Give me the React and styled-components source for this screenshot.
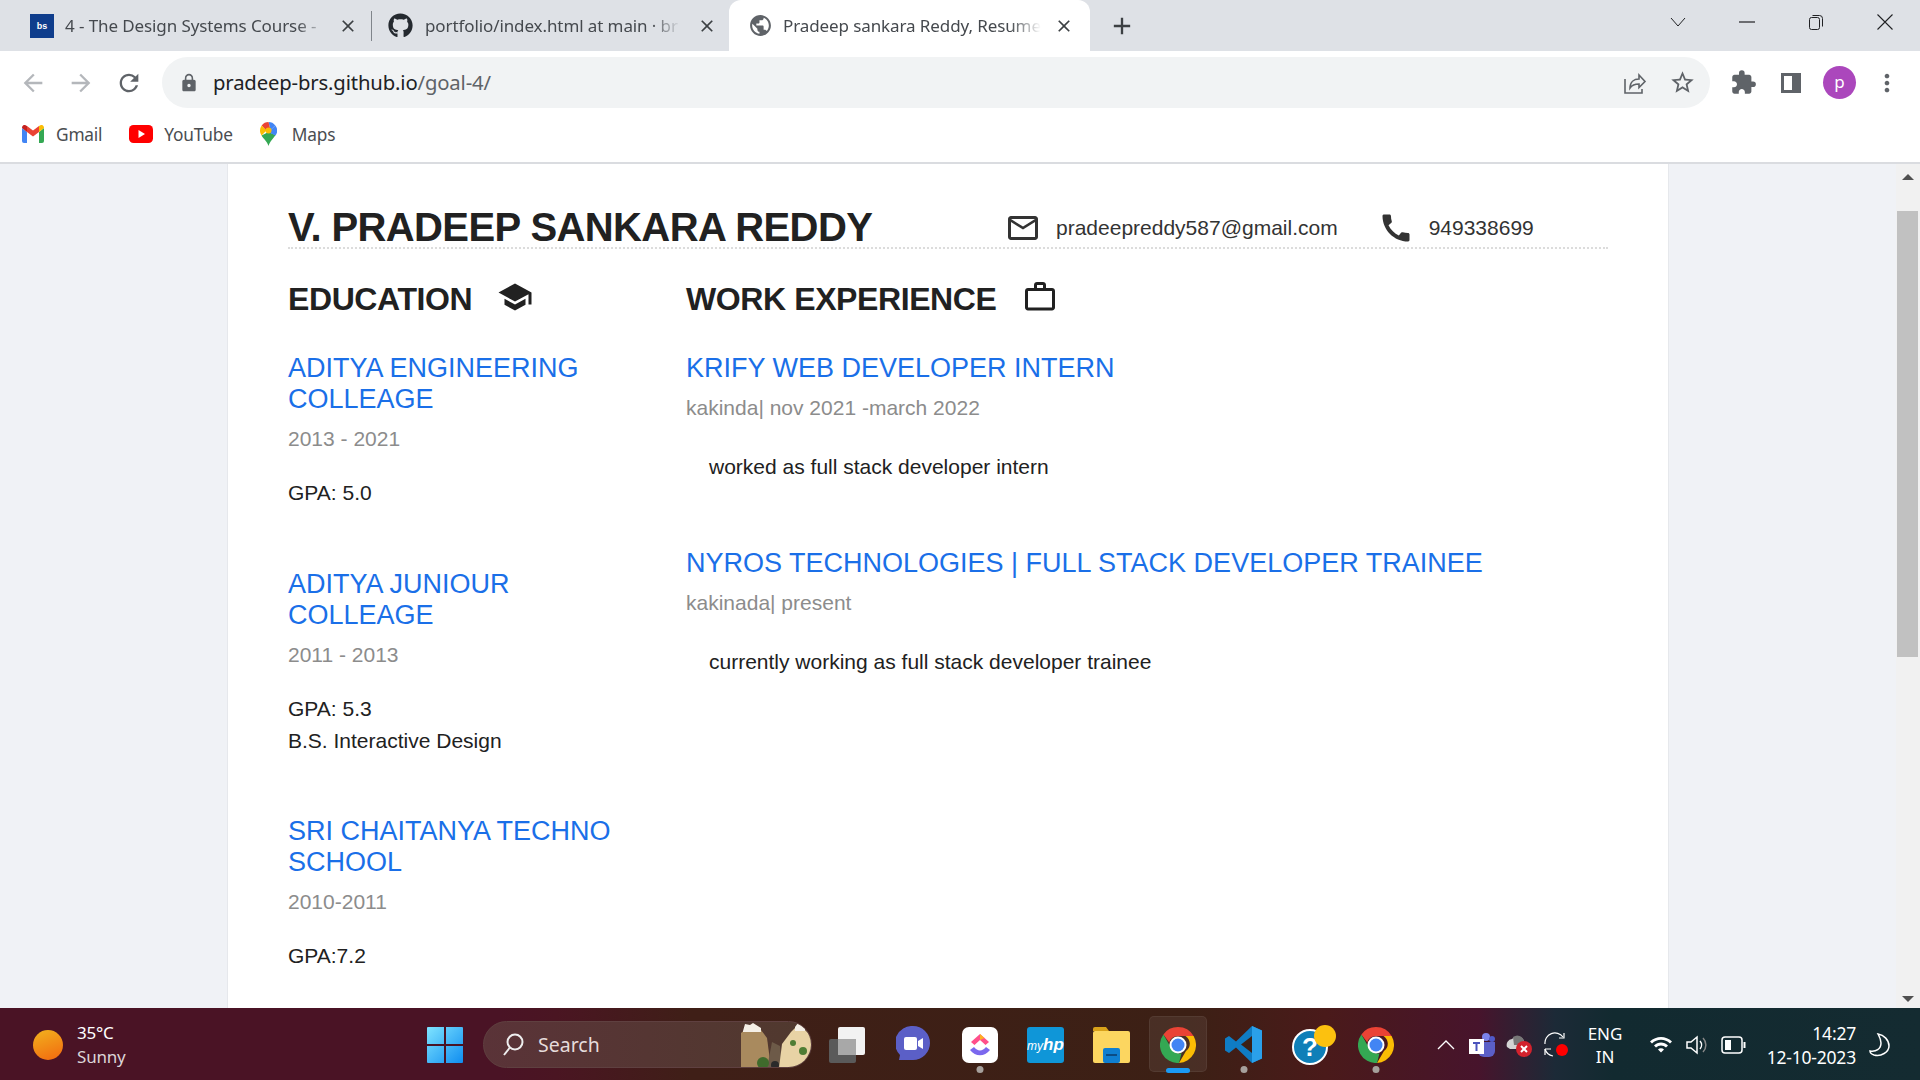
import styled, { createGlobalStyle } from 'styled-components'
import { FaGithub } from 'react-icons/fa'
import {
  MdArrowBack, MdArrowForward, MdRefresh, MdLock, MdStarBorder, MdExtension, MdMoreVert,
  MdClose, MdAdd, MdPublic, MdMailOutline, MdCall, MdSchool, MdWorkOutline, MdWifi,
} from 'react-icons/md'

const Global = createGlobalStyle`
  html, body { margin: 0; padding: 0; height: 100%; overflow: hidden; }
  body { font-family: "Liberation Sans", Arial, sans-serif; background: #fff; }
  * { box-sizing: border-box; }
`

const Screen = styled.div`
  width: 1920px;
  height: 1080px;
  display: flex;
  flex-direction: column;
  overflow: hidden;
`

/* chrome */
const TabStrip = styled.div`
  height: 51px;
  flex: none;
  display: flex;
  align-items: stretch;
  background: #dee1e6;
  font-family: "Noto Sans", sans-serif;
`

const Tab = styled.div`
  width: ${p => p.$w}px;
  display: flex;
  align-items: center;
  padding-left: ${p => p.$pad}px;
  border-radius: 12px 12px 0 0;
  background: ${p => (p.$active ? '#fff' : 'transparent')};
  color: #45494e;
`

const TabSep = styled.div`
  width: 1px;
  height: 30px;
  margin-top: 11px;
  background: #80858b;
`

const TabTitle = styled.span`
  width: ${p => p.$w}px;
  margin-left: ${p => p.$ml}px;
  font-size: 17px;
  white-space: nowrap;
  overflow: hidden;
  letter-spacing: -0.1px;
  -webkit-mask-image: linear-gradient(90deg, #000 88%, transparent);
  mask-image: linear-gradient(90deg, #000 88%, transparent);
`

const TabClose = styled(MdClose)`
  font-size: 20px;
  margin-left: ${p => p.$ml}px;
  color: #3c4043;
  flex: none;
`

const Favicon = styled.div`
  width: 24px;
  height: 24px;
  background: #0f3d8c;
  color: #fff;
  font-size: 9px;
  font-weight: 700;
  display: flex;
  align-items: center;
  justify-content: center;
  font-family: "Liberation Sans", sans-serif;
  flex: none;
`

const NewTab = styled(MdAdd)`
  font-size: 28px;
  color: #3c4043;
  align-self: center;
  margin-left: 18px;
`

const WinButtons = styled.div`
  margin-left: auto;
  display: flex;
  align-items: center;
  height: 44px;
  color: #202124;
`

const WinBtn = styled.div`
  width: ${p => p.$w || 69}px;
  display: flex;
  justify-content: center;
`

const Toolbar = styled.div`
  height: 57px;
  flex: none;
  background: #fff;
  display: flex;
  align-items: flex-start;
  padding-top: 6px;
`

const NavIcons = styled.div`
  width: 162px;
  height: 51px;
  flex: none;
  display: flex;
  align-items: center;
  padding-left: 19px;
  gap: 20px;
  font-size: 28px;
`

const NavIcon = styled.span`
  display: flex;
  color: ${p => (p.$off ? '#b4b7bb' : '#5f6368')};
`

const Omnibox = styled.div`
  width: 1548px;
  height: 51px;
  flex: none;
  background: #f1f3f4;
  border-radius: 26px;
  display: flex;
  align-items: center;
  padding: 0 14px 0 17px;
  color: #5f6368;
`

const Url = styled.div`
  margin-left: 14px;
  padding-bottom: 2px;
  font-family: "Noto Sans", sans-serif;
  font-size: 20.3px;
  letter-spacing: -0.15px;
  color: #202124;
  span { color: #5f6368; }
`

const OmniRight = styled.div`
  margin-left: auto;
  display: flex;
  align-items: center;
  gap: 22px;
`

const ToolIcons = styled.div`
  flex: 1;
  height: 51px;
  display: flex;
  align-items: center;
  padding-left: 20px;
  color: #5f6368;
`

const PanelIcon = styled.div`
  width: 20px;
  height: 20px;
  margin-left: 24px;
  border: 3px solid #5f6368;
  border-right-width: 9px;
`

const Avatar = styled.div`
  width: 33px;
  height: 33px;
  margin-left: 22px;
  border-radius: 50%;
  background: #ab47bc;
  color: #fff;
  font-family: "Noto Sans", sans-serif;
  font-size: 17px;
  display: flex;
  align-items: center;
  justify-content: center;
  padding-bottom: 3px;
`

const MoreIcon = styled(MdMoreVert)`
  font-size: 28px;
  margin-left: 17px;
`

const Bookmarks = styled.div`
  height: 56px;
  flex: none;
  display: flex;
  align-items: center;
  gap: 27px;
  padding: 0 0 2px 22px;
  background: #fff;
  border-bottom: 2px solid #dadce0;
  font-family: "Noto Sans", sans-serif;
  font-size: 17.3px;
  letter-spacing: -0.2px;
  color: #4a4d51;
`

const Bookmark = styled.div`
  display: flex;
  align-items: center;
  gap: ${p => p.$gap}px;
`

/* page */
const Viewport = styled.div`
  flex: 1;
  min-height: 0;
  display: flex;
  background: #f0f2f6;
  overflow: hidden;
`

const Gutter = styled.div`
  width: ${p => p.$w}px;
  flex: none;
`

const Sheet = styled.main`
  width: 1442px;
  flex: none;
  background: #fff;
  padding: 0 60px;
  border-left: 1px solid #e6e8ec;
  border-right: 1px solid #e6e8ec;
  overflow: hidden;
  height: 0;
  min-height: 100%;
`

const Header = styled.header`
  height: 85px;
  display: flex;
  align-items: flex-end;
  border-bottom: 2px dotted #dcdcdc;
  padding-bottom: 1px;
`

const Name = styled.h1`
  margin: 0;
  width: 717px;
  flex: none;
  font-size: 40px;
  line-height: 37px;
  font-weight: 700;
  letter-spacing: -0.6px;
  color: #212121;
  white-space: nowrap;
`

const Contact = styled.div`
  display: flex;
  align-items: center;
  height: 36px;
  font-size: 21px;
  color: #333;
  margin-right: 40px;
  svg { font-size: 36px; color: #333; margin-right: 15px; flex: none; }
`

const Columns = styled.div`
  display: grid;
  grid-template-columns: 398px 1fr;
`

const SectionTitle = styled.h2`
  margin: 30px 0 34px;
  height: 40px;
  display: flex;
  align-items: center;
  gap: 25px;
  font-size: 32px;
  font-weight: 700;
  color: #212121;
  letter-spacing: -0.4px;
  svg { font-size: 36px; margin-top: -4px; }
`

const Entry = styled.section`
  margin-bottom: ${p => p.$mb}px;
`

const EntryTitle = styled.h3`
  margin: 0;
  font-size: 27px;
  line-height: 31px;
  font-weight: 400;
  color: #1a6fe8;
  max-width: ${p => p.$max || 'none'};
`

const EntryMeta = styled.div`
  margin-top: 8px;
  font-size: 21px;
  line-height: 32px;
  color: #8c8c8c;
`

const EntryBody = styled.div`
  margin-top: ${p => p.$mt}px;
  padding-left: ${p => p.$indent || 0}px;
  font-size: 21px;
  line-height: 32px;
  color: #212121;
`

const ScrollBar = styled.div`
  width: 24px;
  flex: none;
  margin-left: auto;
  background: #f1f1f1;
  position: relative;
  display: flex;
  flex-direction: column;
  justify-content: space-between;
  align-items: center;
  padding: 10px 0 6px;
`

const ScrollThumb = styled.div`
  position: absolute;
  left: 1px;
  right: 2px;
  top: 47px;
  height: 446px;
  background: #c1c1c1;
`

const Arrow = styled.div`
  width: 0;
  height: 0;
  border-left: 6px solid transparent;
  border-right: 6px solid transparent;
  ${p => (p.$down ? 'border-top: 6px solid #505050;' : 'border-bottom: 6px solid #505050;')}
`

/* taskbar */
const Taskbar = styled.footer`
  height: 72px;
  flex: none;
  display: flex;
  align-items: center;
  padding-top: 1px;
  color: #fff;
  font-family: "Noto Sans", sans-serif;
  background: linear-gradient(90deg, #4a1325 0%, #4a1325 26%, #4a1522 29%, #3f1f17 36%, #3c2015 62%, #4a1a1a 69%, #47142c 77%, #1c2a37 81%, #122a30 84%, #142b31 100%);
`

const Weather = styled.div`
  width: 427px;
  flex: none;
  display: flex;
  align-items: center;
  padding-left: 33px;
  gap: 14px;
`

const WeatherText = styled.div`
  font-size: 17px;
  line-height: 24px;
  letter-spacing: -0.2px;
  div + div { color: #dcd5d8; }
`

const SunDot = styled.div`
  width: 30px;
  height: 30px;
  border-radius: 50%;
  background: linear-gradient(160deg, #f2b21e, #f2680f);
`

const SearchBox = styled.div`
  width: 329px;
  height: 47px;
  flex: none;
  margin: 0 17px 0 20px;
  border-radius: 24px;
  background: linear-gradient(90deg, #5a3338, #50392e);
  border: 1px solid #5f4040;
  display: flex;
  align-items: center;
  padding-left: 18px;
  overflow: hidden;
  font-size: 19.5px;
  color: #e6dcdc;
  gap: 14px;
`

const SearchArt = styled.svg`
  margin-left: auto;
  flex: none;
`

const TaskIcon = styled.div`
  width: ${p => p.$w || 36}px;
  height: 36px;
  flex: none;
  margin-left: ${p => p.$ml || 0}px;
  position: relative;
  display: flex;
  align-items: center;
  justify-content: center;
  ${p => p.$active && `
    &::before {
      content: '';
      position: absolute;
      left: -11px; right: -11px; top: -11px; bottom: -9px;
      background: rgba(255,255,255,.07);
      border: 1px solid rgba(255,255,255,.06);
      border-radius: 5px;
    }
  `}
  ${p => p.$dot && `
    &::after {
      content: '';
      position: absolute;
      left: 50%;
      bottom: -10px;
      width: ${p.$active ? 24 : 7}px;
      height: ${p.$active ? 5 : 7}px;
      transform: translateX(-50%);
      border-radius: 4px;
      background: ${p.$active ? '#1a9bf5' : '#a6a09c'};
    }
  `}
  > svg { position: relative; z-index: 1; }
`

const Lang = styled.div`
  width: 36px;
  flex: none;
  margin-left: 18px;
  font-size: 17px;
  line-height: 23px;
  text-align: center;
`

const Clock = styled.div`
  width: 92px;
  flex: none;
  margin-left: 18px;
  font-size: 17.5px;
  line-height: 24px;
  text-align: right;
  letter-spacing: -0.2px;
  white-space: nowrap;
`

/* drawn logos */
const GmailLogo = () => (
  <svg width="22" height="18" viewBox="0 0 22 18">
    <path d="M0 3v13a2 2 0 0 0 2 2h3V7z" fill="#4285f4" />
    <path d="M22 3v13a2 2 0 0 1-2 2h-3V7z" fill="#34a853" />
    <path d="M5 7l6 4.500L17 7V1l-6 4.500L5 1z" fill="#ea4335" />
    <path d="M0 3l5 4V1L3.500.2C2-.6 0 .6 0 3z" fill="#c5221f" />
    <path d="M22 3l-5 4V1l1.500-.8C20-.6 22 .6 22 3z" fill="#fbbc04" />
  </svg>
)

const YoutubeLogo = () => (
  <svg width="24" height="18" viewBox="0 0 24 18">
    <rect width="24" height="18" rx="4.500" fill="#f00" />
    <path d="M9.500 5l6.500 4-6.500 4z" fill="#fff" />
  </svg>
)

const MapsLogo = () => (
  <svg width="17" height="24" viewBox="0 0 17 24">
    <path d="M1.500 13.500C3.500 17 7 19 8.500 24c1.500-5 5-7.500 7-11L8.500 10z" fill="#34a853" />
    <path d="M8.500 0a8.500 8.500 0 0 1 6.800 3.400L10.500 8z" fill="#4285f4" />
    <path d="M15.300 3.400A8.500 8.500 0 0 1 15.500 13.500L8 10l2.500-2z" fill="#4285f4" />
    <path d="M1.700 3.400A8.500 8.500 0 0 1 8.500 0l2 8-4 1z" fill="#ea4335" />
    <path d="M0 8.500a8.500 8.500 0 0 1 1.700-5.100l4.800 5.100L1.500 13.500A8 8 0 0 1 0 8.500z" fill="#fbbc04" />
    <circle cx="8.500" cy="8.500" r="3" fill="#fbbc04" />
  </svg>
)

const ChromeLogo = ({ size = 36 }) => (
  <svg width={size} height={size} viewBox="0 0 36 36">
    <path d="M18 0a18 18 0 0 1 15.600 9H18a9 9 0 0 0-8.700 6.500L3.400 7.400A18 18 0 0 1 18 0z" fill="#ea4335" />
    <path d="M33.600 9A18 18 0 0 1 19 36l7-12a9 9 0 0 0-.5-15z" fill="#fbbc04" />
    <path d="M3.400 7.400L10.500 20a9 9 0 0 0 11 6.200L19 36A18 18 0 0 1 3.400 7.400z" fill="#34a853" />
    <circle cx="18" cy="18" r="8.500" fill="#fff" />
    <circle cx="18" cy="18" r="6.500" fill="#4285f4" />
  </svg>
)

const TaskView = () => (
  <svg width="36" height="36" viewBox="0 0 36 36">
    <rect x="0" y="12" width="27" height="24" rx="2" fill="#5a5a5a" />
    <rect x="9" y="0" width="27" height="28" rx="2" fill="#f2f2f2" />
    <rect x="9" y="12" width="18" height="16" fill="#a8a8a8" />
  </svg>
)

const MeetLogo = () => (
  <svg width="34" height="38" viewBox="0 0 34 38">
    <path d="M17 0a17 17 0 0 1 0 34H3l1-5A17 17 0 0 1 17 0z" fill="#5b5fc7" />
    <rect x="8" y="11" width="13" height="13" rx="2" fill="#fff" />
    <path d="M22 15l5-3v11l-5-3z" fill="#fff" />
  </svg>
)

const ClickupLogo = () => (
  <svg width="36" height="36" viewBox="0 0 36 36">
    <rect width="36" height="36" rx="7" fill="#fff" />
    <path d="M9 15l9-8 9 8-3.500 3L18 13l-5.500 5z" fill="#ff4f8b" />
    <path d="M8 23l4-3c3.500 4.500 8.500 4.500 12 0l4 3c-5.500 7-14.500 7-20 0z" fill="#7b68ee" />
    <path d="M18 7l4.500 4L18 13z" fill="#ffb020" />
  </svg>
)

const MyHpLogo = () => (
  <svg width="37" height="36" viewBox="0 0 37 36">
    <rect width="37" height="36" rx="3" fill="#0f96d8" />
    <text x="18.500" y="23" textAnchor="middle" fill="#fff" fontSize="12" fontFamily="Liberation Sans" fontStyle="italic">my<tspan fontWeight="700" fontSize="17">hp</tspan></text>
  </svg>
)

const FolderLogo = () => (
  <svg width="37" height="36" viewBox="0 0 37 36">
    <path d="M0 2a2 2 0 0 1 2-2h11l3 4h-16z" fill="#d9a21a" />
    <rect y="4" width="37" height="32" rx="2" fill="#fcd660" />
    <rect x="10" y="21" width="17" height="15" rx="2" fill="#0f7fd1" />
    <rect x="13" y="27" width="11" height="2" fill="#0b4c85" />
  </svg>
)

const VscodeLogo = () => (
  <svg width="37" height="37" viewBox="0 0 37 37">
    <path d="M27 0l10 4.500v28L27 37 11 21.500 4 27l-4-2.500V12.500L4 10l7 5.500z" fill="#0f7cc4" />
    <path d="M27 0l10 4.500v28L27 37z" fill="#2aa0ea" />
    <path d="M27 10L16 18.500 27 27z" fill="#3c2015" />
  </svg>
)

const HelpLogo = () => (
  <svg width="44" height="40" viewBox="0 0 44 40">
    <circle cx="18" cy="22" r="17" fill="#0f7fb8" stroke="#fff" strokeWidth="2" />
    <text x="18" y="31" textAnchor="middle" fill="#fff" fontSize="26" fontWeight="700" fontFamily="Liberation Sans">?</text>
    <circle cx="33" cy="11" r="11" fill="#fcc10f" />
  </svg>
)

const SearchGlass = () => (
  <svg width="22" height="24" viewBox="0 0 22 24" fill="none" stroke="#eee" strokeWidth="2">
    <circle cx="13" cy="9" r="7.500" />
    <path d="M7.500 15L2 22" />
  </svg>
)

const Landscape = () => (
  <SearchArt width="70" height="47" viewBox="0 0 70 47">
    <path d="M0 47V12l6-5 14 2 6 8 4 30z" fill="#a98a5e" />
    <path d="M26 47l5-26 8 4 2 22z" fill="#6d5a48" />
    <path d="M38 47l3-24 9-12 8-8 12 12v32z" fill="#e8d3a5" />
    <path d="M2 10l2-7 5 1 3-2 8 5v4H2zM54 6l3-4 5-1 2 5v4H54z" fill="#f4efe6" />
    <circle cx="22" cy="42" r="6" fill="#3f6b2c" />
    <circle cx="34" cy="44" r="4" fill="#2a2a2a" />
    <circle cx="52" cy="22" r="3" fill="#4f7d34" />
    <circle cx="62" cy="30" r="4" fill="#4f7d34" />
  </SearchArt>
)

const TeamsIcon = () => (
  <svg width="26" height="26" viewBox="0 0 26 26">
    <circle cx="17" cy="5" r="4" fill="#7b83eb" />
    <circle cx="23" cy="7" r="3" fill="#5059c9" />
    <path d="M9 10h17v9a6 6 0 0 1-6 6h-5a6 6 0 0 1-6-6z" fill="#5b5fc7" />
    <rect y="7" width="15" height="15" fill="#fff" />
    <path d="M4 10h7v2H8.500v7h-2v-7H4z" fill="#4b53bc" />
  </svg>
)

const CloudOff = () => (
  <svg width="26" height="24" viewBox="0 0 26 24">
    <path d="M1 14a6 6 0 0 1 5-8 7 7 0 0 1 12 2v8H4z" fill="#d4d4d4" />
    <path d="M7 4a7 7 0 0 1 11 4v4H8z" fill="#777" />
    <circle cx="18" cy="16" r="8" fill="#d3222d" />
    <path d="M15 13l6 6m0-6l-6 6" stroke="#fff" strokeWidth="2" />
  </svg>
)

const SyncIcon = () => (
  <svg width="26" height="26" viewBox="0 0 26 26" fill="none" stroke="#fff" strokeWidth="1.200">
    <path d="M2 12A10 10 0 0 1 20 5" />
    <path d="M21 1v5h-5" />
    <path d="M2 17h6M2 17v6" />
    <path d="M2 17a10 10 0 0 0 8 7" />
    <circle cx="19" cy="18" r="6" fill="#f00" stroke="none" />
  </svg>
)

const VolumeIcon = () => (
  <svg width="24" height="24" viewBox="0 0 24 24" fill="none" stroke="#fff" strokeWidth="1.500">
    <path d="M2 9h4l6-5v16l-6-5H2z" />
    <path d="M15 8a6 6 0 0 1 0 8" />
    <path d="M18 5a10 10 0 0 1 0 14" stroke="#888" />
  </svg>
)

const BatteryIcon = () => (
  <svg width="25" height="18" viewBox="0 0 25 18" fill="none" stroke="#fff" strokeWidth="1.500">
    <rect x="1" y="1" width="20" height="16" rx="3" />
    <rect x="4" y="4" width="6" height="10" fill="#fff" stroke="none" />
    <path d="M23.500 6v6" strokeWidth="2" />
  </svg>
)

const MoonIcon = () => (
  <svg width="22" height="26" viewBox="0 0 22 26" fill="none" stroke="#fff" strokeWidth="1.500">
    <path d="M9 2c6 1 11 6 11 12 0 6-8 11-15 9-3-1-4-3-4-4 6 1 11-2 11-8 0-4-2-7-3-9z" />
  </svg>
)

const WinLogo = () => (
  <svg width="36" height="36" viewBox="0 0 36 36">
    <defs>
      <linearGradient id="w" x1="0" y1="0" x2="1" y2="1">
        <stop offset="0" stopColor="#7fe4ff" />
        <stop offset="1" stopColor="#0f8df0" />
      </linearGradient>
    </defs>
    <path d="M0 1a1 1 0 0 1 1-1h16v17H0zM19 0h16a1 1 0 0 1 1 1v16H19zM0 19h17v17H1a1 1 0 0 1-1-1zM19 19h17v16a1 1 0 0 1-1 1H19z" fill="url(#w)" />
  </svg>
)

const ShareIcon = () => (
  <svg width="24" height="24" viewBox="0 0 24 24" fill="none" stroke="#5f6368" strokeWidth="1.600">
    <path d="M2 8v14h17v-4" />
    <path d="M7 17c0-6 4-9 9-9V4l6 6.500-6 6V13c-4 0-7 1-9 4z" />
  </svg>
)

const ChevronThin = () => (
  <svg width="16" height="10" viewBox="0 0 16 10" fill="none" stroke="#202124" strokeWidth="1">
    <path d="M1 1l7 8 7-8" />
  </svg>
)

const MinimizeIcon = () => (
  <svg width="16" height="16" viewBox="0 0 16 16">
    <path d="M0 8h16" stroke="#202124" strokeWidth="1.200" />
  </svg>
)

const RestoreIcon = () => (
  <svg width="16" height="16" viewBox="0 0 16 16" fill="none" stroke="#202124" strokeWidth="1">
    <rect x="1.500" y="3.500" width="10" height="12" rx="2" />
    <path d="M4.500 1.500h7a3 3 0 0 1 3 3v8" />
  </svg>
)

const CloseThin = () => (
  <svg width="16" height="16" viewBox="0 0 16 16" fill="none" stroke="#202124" strokeWidth="1.100">
    <path d="M.5.500l15 15m0-15l-15 15" />
  </svg>
)

const CaretUp = () => (
  <svg width="18" height="11" viewBox="0 0 18 11" fill="none" stroke="#fff" strokeWidth="1.300">
    <path d="M1 10l8-8 8 8" />
  </svg>
)

const education = [
  { name: 'ADITYA ENGINEERING COLLEAGE', years: '2013 - 2021', lines: ['GPA: 5.0'] },
  { name: 'ADITYA JUNIOUR COLLEAGE', years: '2011 - 2013', lines: ['GPA: 5.3', 'B.S. Interactive Design'] },
  { name: 'SRI CHAITANYA TECHNO SCHOOL', years: '2010-2011', lines: ['GPA:7.2'] },
]

const work = [
  { name: 'KRIFY WEB DEVELOPER INTERN', meta: 'kakinda| nov 2021 -march 2022', text: 'worked as full stack developer intern' },
  { name: 'NYROS TECHNOLOGIES | FULL STACK DEVELOPER TRAINEE', meta: 'kakinada| present', text: 'currently working as full stack developer trainee' },
]

const App = () => (
  <Screen>
    <Global />

    <TabStrip>
      <Tab $w={371} $pad={30}>
        <Favicon>bs</Favicon>
        <TabTitle $w={263} $ml={11}>4 - The Design Systems Course -</TabTitle>
        <TabClose $ml={10} />
      </Tab>
      <TabSep />
      <Tab $w={357} $pad={16}>
        <FaGithub size={25} color="#24292f" />
        <TabTitle $w={256} $ml={12}>portfolio/index.html at main · br</TabTitle>
        <TabClose $ml={16} />
      </Tab>
      <Tab $w={361} $pad={19} $active>
        <MdPublic size={25} color="#5f6368" />
        <TabTitle $w={258} $ml={10}>Pradeep sankara Reddy, Resume</TabTitle>
        <TabClose $ml={13} />
      </Tab>
      <NewTab />
      <WinButtons>
        <WinBtn><ChevronThin /></WinBtn>
        <WinBtn><MinimizeIcon /></WinBtn>
        <WinBtn><RestoreIcon /></WinBtn>
        <WinBtn $w={70}><CloseThin /></WinBtn>
      </WinButtons>
    </TabStrip>

    <Toolbar>
      <NavIcons>
        <NavIcon $off><MdArrowBack /></NavIcon>
        <NavIcon $off><MdArrowForward /></NavIcon>
        <NavIcon><MdRefresh /></NavIcon>
      </NavIcons>
      <Omnibox>
        <MdLock size={20} />
        <Url>pradeep-brs.github.io<span>/goal-4/</span></Url>
        <OmniRight>
          <ShareIcon />
          <MdStarBorder size={27} />
        </OmniRight>
      </Omnibox>
      <ToolIcons>
        <MdExtension size={27} />
        <PanelIcon />
        <Avatar>p</Avatar>
        <MoreIcon />
      </ToolIcons>
    </Toolbar>

    <Bookmarks>
      <Bookmark $gap={12}><GmailLogo />Gmail</Bookmark>
      <Bookmark $gap={11}><YoutubeLogo />YouTube</Bookmark>
      <Bookmark $gap={15}><MapsLogo />Maps</Bookmark>
    </Bookmarks>

    <Viewport>
      <Gutter $w={227} />
      <Sheet>
        <Header>
          <Name>V. PRADEEP SANKARA REDDY</Name>
          <Contact><MdMailOutline />pradeepreddy587@gmail.com</Contact>
          <Contact><MdCall />949338699</Contact>
        </Header>
        <Columns>
          <div>
            <SectionTitle>EDUCATION <MdSchool /></SectionTitle>
            {education.map(e => (
              <Entry key={e.name} $mb={59.5}>
                <EntryTitle $max="330px">{e.name}</EntryTitle>
                <EntryMeta>{e.years}</EntryMeta>
                <EntryBody $mt={22}>
                  {e.lines.map(l => <div key={l}>{l}</div>)}
                </EntryBody>
              </Entry>
            ))}
          </div>
          <div>
            <SectionTitle>WORK EXPERIENCE <MdWorkOutline /></SectionTitle>
            {work.map(w => (
              <Entry key={w.name} $mb={65}>
                <EntryTitle>{w.name}</EntryTitle>
                <EntryMeta>{w.meta}</EntryMeta>
                <EntryBody $mt={27} $indent={23}>{w.text}</EntryBody>
              </Entry>
            ))}
          </div>
        </Columns>
      </Sheet>
      <ScrollBar>
        <Arrow />
        <ScrollThumb />
        <Arrow $down />
      </ScrollBar>
    </Viewport>

    <Taskbar>
      <Weather>
        <SunDot />
        <WeatherText>
          <div>35°C</div>
          <div>Sunny</div>
        </WeatherText>
      </Weather>
      <TaskIcon><WinLogo /></TaskIcon>
      <SearchBox>
        <SearchGlass />
        Search
        <Landscape />
      </SearchBox>
      <TaskIcon><TaskView /></TaskIcon>
      <TaskIcon $ml={30}><MeetLogo /></TaskIcon>
      <TaskIcon $ml={31} $dot><ClickupLogo /></TaskIcon>
      <TaskIcon $w={37} $ml={29}><MyHpLogo /></TaskIcon>
      <TaskIcon $w={37} $ml={29}><FolderLogo /></TaskIcon>
      <TaskIcon $ml={30} $dot $active><ChromeLogo /></TaskIcon>
      <TaskIcon $w={37} $ml={29} $dot><VscodeLogo /></TaskIcon>
      <TaskIcon $w={44} $ml={30}><HelpLogo /></TaskIcon>
      <TaskIcon $ml={22} $dot><ChromeLogo /></TaskIcon>
      <TaskIcon $w={18} $ml={43}><CaretUp /></TaskIcon>
      <TaskIcon $w={26} $ml={14}><TeamsIcon /></TaskIcon>
      <TaskIcon $w={26} $ml={11}><CloudOff /></TaskIcon>
      <TaskIcon $w={26} $ml={11}><SyncIcon /></TaskIcon>
      <Lang>ENG<br />IN</Lang>
      <TaskIcon $w={24} $ml={26}><MdWifi size={27} color="#fff" /></TaskIcon>
      <TaskIcon $w={24} $ml={12}><VolumeIcon /></TaskIcon>
      <TaskIcon $w={25} $ml={12}><BatteryIcon /></TaskIcon>
      <Clock>14:27<br />12-10-2023</Clock>
      <TaskIcon $w={22} $ml={13}><MoonIcon /></TaskIcon>
    </Taskbar>
  </Screen>
)

export default App
